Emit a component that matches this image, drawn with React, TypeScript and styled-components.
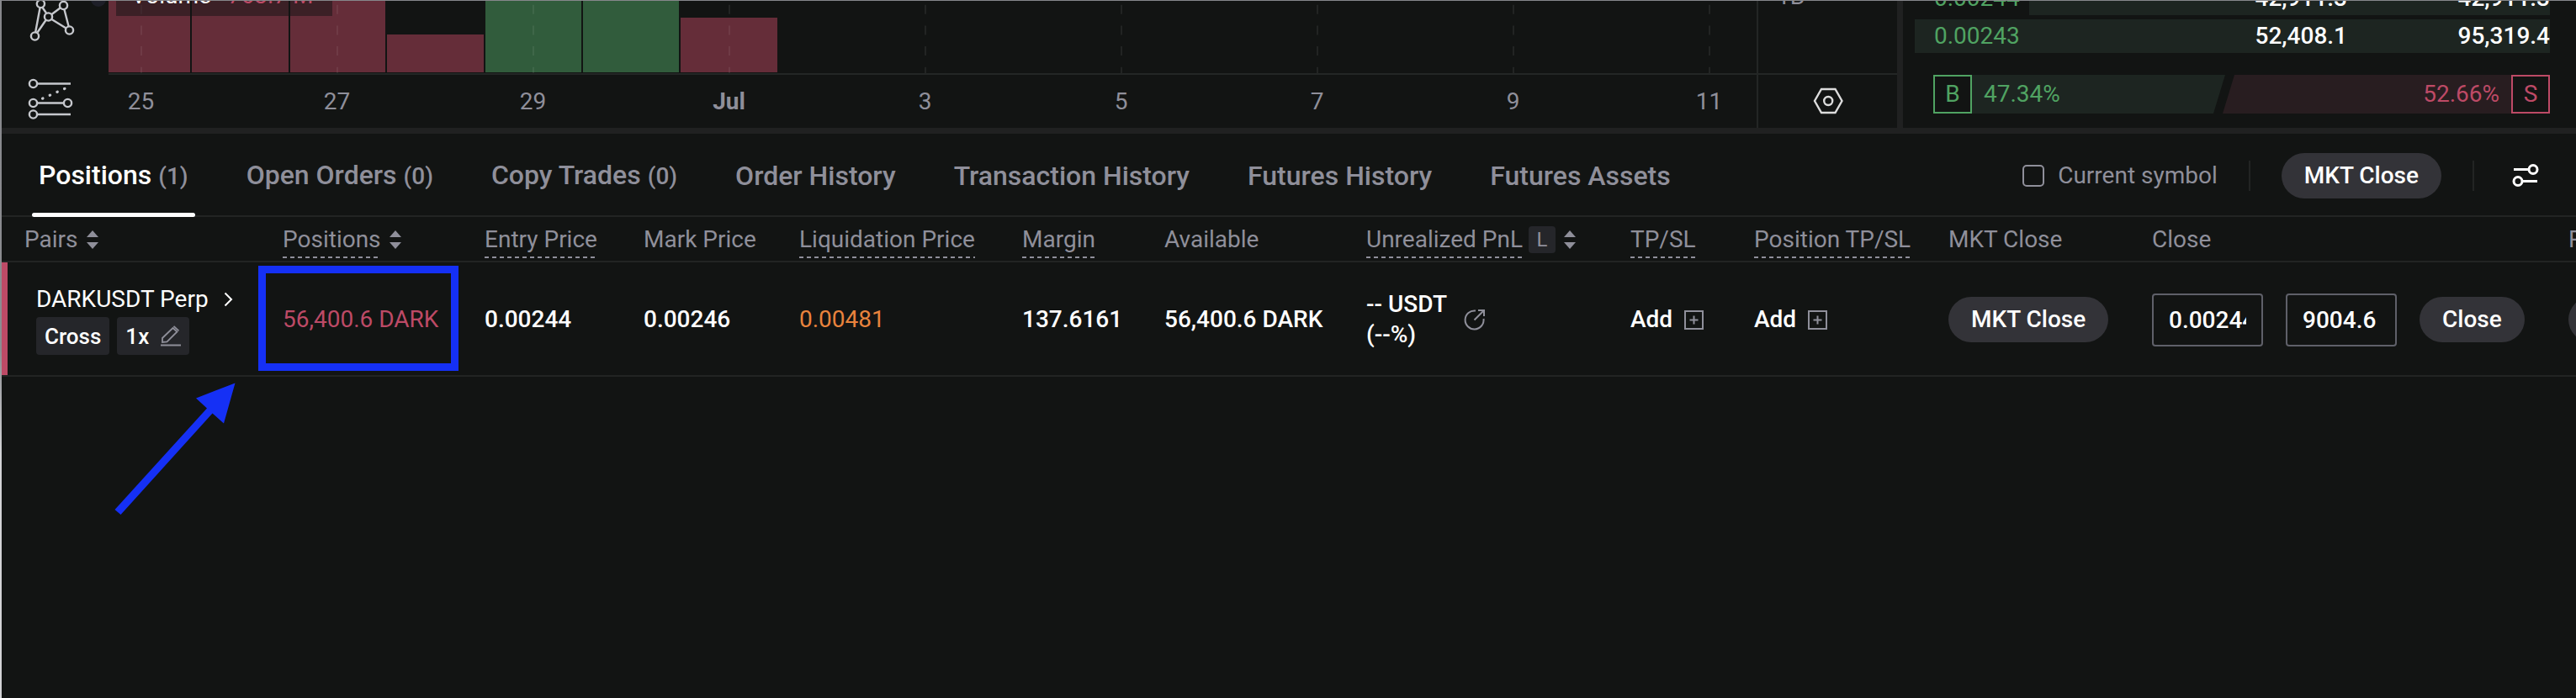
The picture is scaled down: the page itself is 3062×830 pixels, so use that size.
import React from "react";
import styled, { createGlobalStyle, css } from "styled-components";

const c = {
  bg: "#121413",
  band: "#202121",
  line: "#222423",
  grid: "#232625",
  muted: "#8f8f9a",
  white: "#ffffff",
  green: "#50a362",
  greenBar: "#315c3c",
  greenFill: "#1d2521",
  red: "#bd4a66",
  redBar: "#652d39",
  redFill: "#281d20",
  orange: "#e9833d",
  button: "#333338",
  chip: "#25262a",
  outline: "#5f6069",
  mark: "#1530f5",
  icon: "#c6c8cd",
};

const Global = createGlobalStyle`
  *, *::before, *::after { box-sizing: border-box; }
  body { margin: 0; background: ${c.bg}; overflow-x: hidden; }
  button, input { font: inherit; color: inherit; }
`;

const Frame = styled.div`
  display: flex;
  min-height: 100vh;
  padding: 1px 0 0 2px;
  background: linear-gradient(#86878b 0%, #8c8d91 50%, #d2d3d6 65%);
  font-family: Roboto, "Liberation Sans", sans-serif;
  font-size: 28px;
  line-height: 36px;
  color: ${c.white};
`;

const Page = styled.main`
  flex: 1;
  min-width: 0;
  display: flex;
  flex-direction: column;
  background: ${c.bg};
`;

const Upper = styled.div`
  display: flex;
  height: 158px;
  overflow: hidden;
  border-bottom: 7px solid ${c.band};
`;

const DrawingTools = styled.aside`
  position: relative;
  flex: 0 0 127px;
`;

const ToolButton = styled.button`
  display: block;
  width: 62px;
  height: 62px;
  margin: 0 0 0 26px;
  padding: 0;
  border: 0;
  background: none;
  svg { display: block; }
  & + & { margin-top: 22px; }
`;

const ToolToggle = styled.span`
  position: absolute;
  top: -11px;
  right: 3px;
  width: 18px;
  height: 18px;
  border-radius: 9px;
  background: #1e1f28;
`;

const Chart = styled.section`
  flex: 1;
  min-width: 0;
`;

const Plot = styled.div`
  position: relative;
  height: 88px;
  border-bottom: 2px solid ${c.grid};
  svg { display: block; width: 100%; height: 100%; }
`;

const Legend = styled.div`
  position: absolute;
  top: -22px;
  left: 9px;
  display: flex;
  gap: 20px;
  width: 257px;
  height: 40px;
  padding-left: 18px;
  line-height: 32px;
  background: rgba(18, 20, 19, 0.5);
  span { color: ${c.red}; }
`;

const TimeAxis = styled.div`
  display: flex;
  overflow: hidden;
  margin-left: -78px;
  height: 63px;
  line-height: 63px;
  color: ${c.muted};
`;

const Tick = styled.time<{ $strong?: boolean }>`
  flex: 0 0 233px;
  text-align: center;
  font-weight: ${(p) => (p.$strong ? 700 : 400)};
`;

const PriceScale = styled.section`
  flex: 0 0 167px;
  border-left: 2px solid ${c.grid};
`;

const ScaleValues = styled.div`
  height: 88px;
  overflow: hidden;
  padding-left: 22px;
  border-bottom: 2px solid ${c.grid};
  color: ${c.muted};
  div { margin-top: -23px; }
`;

const ScaleSettings = styled.button`
  display: block;
  width: 100%;
  height: 62px;
  padding: 0;
  border: 0;
  background: none;
  svg { display: block; margin: 0 auto; }
`;

const Book = styled.section`
  flex: 0 0 807px;
  display: flex;
  flex-direction: column;
  justify-content: flex-end;
  gap: 5px;
  padding: 0 31px 17px 14px;
  border-left: 7px solid ${c.band};
`;

const BookRow = styled.div<{ $depth: number }>`
  flex: none;
  display: grid;
  grid-template-columns: 1fr 241px 241px;
  padding-left: 23px;
  height: 40px;
  line-height: 40px;
  text-align: right;
  background: linear-gradient(${c.greenFill}, ${c.greenFill}) right / ${(p) => p.$depth}% 100% no-repeat;
`;

const BookPrice = styled.span`
  text-align: left;
  color: ${c.green};
`;

const BookAmount = styled.span`
  font-weight: 500;
`;

const Ratio = styled.div`
  flex: none;
  display: flex;
  margin: 21px 0 0 22px;
  height: 46px;
  line-height: 42px;
`;

const RatioSide = styled.div<{ $sell?: boolean }>`
  display: flex;
  align-items: center;
  gap: 14px;
  color: ${(p) => (p.$sell ? c.red : c.green)};
  background: ${(p) => (p.$sell ? c.redFill : c.greenFill)};
  ${(p) =>
    p.$sell
      ? css`
          flex: 1;
          justify-content: flex-end;
          margin-left: -3px;
          clip-path: polygon(14px 0, 100% 0, 100% 100%, 0 100%);
        `
      : css`
          flex: 0 0 47.34%;
          clip-path: polygon(0 0, 100% 0, calc(100% - 14px) 100%, 0 100%);
        `}
`;

const SideBox = styled.span`
  width: 46px;
  height: 46px;
  text-align: center;
  border: 2px solid currentColor;
  background: ${c.bg};
`;

const TabBar = styled.div`
  display: flex;
  align-items: center;
  justify-content: space-between;
  height: 99px;
  padding: 2px 44px 0 36px;
  border-bottom: 2px solid ${c.line};
`;

const Tabs = styled.nav`
  display: flex;
  align-self: stretch;
  gap: 53px;
`;

const Tab = styled.button<{ $active?: boolean }>`
  position: relative;
  padding: 0 8px;
  border: 0;
  background: none;
  font-size: 32px;
  font-weight: 500;
  white-space: nowrap;
  color: ${(p) => (p.$active ? c.white : c.muted)};
  small { font-size: 28px; color: ${c.muted}; }
  ${(p) =>
    p.$active &&
    css`
      &::after {
        content: "";
        position: absolute;
        left: 0;
        right: 0;
        bottom: -2px;
        height: 5px;
        border-radius: 3px;
        background: ${c.white};
      }
    `}
`;

const TabTools = styled.div`
  display: flex;
  align-items: center;
  gap: 37px;
`;

const SymbolFilter = styled.label`
  display: flex;
  align-items: center;
  gap: 16px;
  color: ${c.muted};
`;

const Checkbox = styled.input`
  appearance: none;
  width: 26px;
  height: 26px;
  margin: 0;
  border: 2px solid ${c.muted};
  border-radius: 5px;
`;

const Divider = styled.span`
  width: 2px;
  height: 36px;
  background: ${c.line};
`;

const Pill = styled.button`
  height: 54px;
  padding: 0 27px;
  border: 0;
  border-radius: 27px;
  background: ${c.button};
  font-weight: 500;
  white-space: nowrap;
`;

const PlainButton = styled.button`
  display: inline-flex;
  align-items: center;
  gap: 14px;
  padding: 0;
  border: 0;
  background: none;
  font-weight: 500;
  svg { display: block; }
`;

const SettingsButton = styled(PlainButton)`
  margin-left: 8px;
`;

const TableArea = styled.section`
  position: relative;
  flex: 1;
  overflow: hidden;
`;

const Table = styled.table`
  table-layout: fixed;
  width: 3252px;
  border-collapse: separate;
  border-spacing: 0;
  text-align: left;
`;

const Th = styled.th`
  height: 54px;
  padding: 2px 0 0;
  border-bottom: 2px solid ${c.line};
  font-weight: 400;
  line-height: 32px;
  white-space: nowrap;
  color: ${c.muted};
  &:first-child { padding-left: 27px; }
`;

const HeadCell = styled.div`
  display: flex;
  align-items: center;
  gap: 10px;
`;

const Term = styled.span`
  display: inline-block;
  padding: 6px 0;
  background: repeating-linear-gradient(90deg, ${c.muted} 0 5px, transparent 5px 9px) bottom / 100% 2px no-repeat;
`;

const ModeKey = styled.kbd`
  width: 32px;
  height: 32px;
  margin-left: -3px;
  border-radius: 4px;
  background: ${c.chip};
  font: inherit;
  font-size: 24px;
  text-align: center;
`;

const Td = styled.td<{ $tone?: string }>`
  position: relative;
  height: 136px;
  padding: 2px 0 0;
  border-bottom: 2px solid ${c.line};
  white-space: nowrap;
  font-weight: ${(p) => (p.$tone ? 400 : 500)};
  color: ${(p) => p.$tone || c.white};
  &:first-child {
    padding-left: 41px;
    box-shadow: inset 7px 0 ${c.red};
  }
`;

const PairLink = styled.a`
  display: flex;
  align-items: center;
  gap: 18px;
  margin-bottom: 3px;
  font-weight: 400;
  color: inherit;
  text-decoration: none;
`;

const Chips = styled.div`
  display: flex;
  gap: 9px;
`;

const Chip = styled.button`
  display: flex;
  align-items: center;
  gap: 14px;
  height: 45px;
  padding: 0 10px;
  border: 0;
  border-radius: 4px;
  background: ${c.chip};
  font-size: 26px;
  font-weight: 500;
`;

const Pnl = styled.div`
  display: flex;
  align-items: center;
  gap: 20px;
`;

const CloseForm = styled.form`
  display: flex;
  align-items: center;
  gap: 27px;
`;

const Amount = styled.input`
  width: 132px;
  height: 63px;
  padding: 0 18px;
  border: 2px solid ${c.outline};
  border-radius: 4px;
  background: none;
  outline: 0;
`;

const Highlight = styled.span`
  position: absolute;
  inset: 4px 31px 5px -29px;
  border: 9px solid ${c.mark};
`;

const Pointer = styled.svg`
  position: absolute;
  left: 128px;
  top: 195px;
`;

const SortIcon = () => (
  <svg width="14" height="22" viewBox="0 0 14 22" fill={c.muted} aria-hidden="true">
    <path d="M7 0 14 8H0zM7 22 0 14h14z" />
  </svg>
);

const PlusBox = () => (
  <svg width="23" height="23" viewBox="0 0 23 23" fill="none" stroke={c.muted} strokeWidth="2" aria-hidden="true">
    <rect x="1" y="1" width="21" height="21" />
    <path d="M11.5 6.5v10M6.5 11.5h10" />
  </svg>
);

const bars = [
  { x: 0, w: 97, top: 0, up: false },
  { x: 99, w: 115, top: 0, up: false },
  { x: 216, w: 113, top: 0, up: false },
  { x: 331, w: 115, top: 40, up: false },
  { x: 448, w: 114, top: 0, up: true },
  { x: 564, w: 114, top: 0, up: true },
  { x: 680, w: 115, top: 20, up: false },
];

const ticks = ["25", "27", "29", "Jul", "3", "5", "7", "9", "11"];

const tabs: { label: string; count?: number }[] = [
  { label: "Positions", count: 1 },
  { label: "Open Orders", count: 0 },
  { label: "Copy Trades", count: 0 },
  { label: "Order History" },
  { label: "Transaction History" },
  { label: "Futures History" },
  { label: "Futures Assets" },
];

const columns: { label: string; width: number; term?: boolean; sort?: boolean; mode?: string }[] = [
  { label: "Pairs", width: 334, sort: true },
  { label: "Positions", width: 240, term: true, sort: true },
  { label: "Entry Price", width: 189, term: true },
  { label: "Mark Price", width: 185 },
  { label: "Liquidation Price", width: 265, term: true },
  { label: "Margin", width: 169, term: true },
  { label: "Available", width: 240 },
  { label: "Unrealized PnL", width: 314, term: true, sort: true, mode: "L" },
  { label: "TP/SL", width: 147, term: true },
  { label: "Position TP/SL", width: 231, term: true },
  { label: "MKT Close", width: 242 },
  { label: "Close", width: 495 },
  { label: "Reverse", width: 201 },
];

export default function App() {
  return (
    <Frame>
      <Global />
      <Page>
        <Upper>
          <DrawingTools>
            <ToolToggle />
            <ToolButton aria-label="Patterns">
              <svg width="62" height="62" viewBox="28 1 62 62" fill="none" stroke={c.icon} strokeWidth="2.4">
                <path d="M47.6 9 42.2 38M50.5 9l4.5 6.5M61.5 17l10-7.5M76.5 11.5l5 19.5M61.5 23l17 10.5M54.5 24l-10 14.5" />
                <circle cx="48.4" cy="4.5" r="4.6" />
                <circle cx="75.5" cy="6.5" r="4.6" />
                <circle cx="57.5" cy="20" r="4.6" />
                <circle cx="82.5" cy="36" r="4.6" />
                <circle cx="41.5" cy="43" r="4.6" />
              </svg>
            </ToolButton>
            <ToolButton aria-label="Forecasting and measurement">
              <svg width="62" height="62" viewBox="28 85 62 62" fill="none" stroke={c.icon} strokeWidth="2.4">
                <path d="M44 99.5h40M44 122.5h32M44 136h40" />
                <circle cx="39.5" cy="99.5" r="4.6" />
                <circle cx="39.5" cy="122.5" r="4.6" />
                <circle cx="80.5" cy="122.5" r="4.6" />
                <circle cx="39.5" cy="136" r="4.6" />
                <path d="M50.5 117.2 80 104" strokeWidth="3.2" strokeLinecap="round" strokeDasharray="0.5 9" />
              </svg>
            </ToolButton>
          </DrawingTools>
          <Chart>
            <Plot>
              <svg aria-label="Volume chart">
                {bars.map((b) => (
                  <rect key={b.x} x={b.x} y={b.top} width={b.w} height={85 - b.top} fill={b.up ? c.greenBar : c.redBar} />
                ))}
                {ticks.map((t, i) => (
                  <path
                    key={t}
                    d={`M${39 + i * 233} -20V86`}
                    stroke="#ffffff"
                    strokeOpacity="0.07"
                    strokeWidth="2"
                    strokeDasharray="11 13.7"
                  />
                ))}
              </svg>
              <Legend>
                Volume <span>763.7 M</span>
              </Legend>
            </Plot>
            <TimeAxis>
              {ticks.map((t) => (
                <Tick key={t} $strong={t === "Jul"}>
                  {t}
                </Tick>
              ))}
            </TimeAxis>
          </Chart>
          <PriceScale>
            <ScaleValues>
              <div>1B</div>
            </ScaleValues>
            <ScaleSettings aria-label="Scale settings">
              <svg width="36" height="32" viewBox="0 0 36 32" fill="none" stroke="#dcdcdc" strokeWidth="2.4">
                <path d="M10 2h16.500L34.500 16 26.500 30H10L2 16z" />
                <circle cx="18.2" cy="16" r="5" />
              </svg>
            </ScaleSettings>
          </PriceScale>
          <Book>
            <BookRow $depth={82}>
              <BookPrice>0.00244</BookPrice>
              <BookAmount>42,911.3</BookAmount>
              <BookAmount>42,911.3</BookAmount>
            </BookRow>
            <BookRow $depth={100}>
              <BookPrice>0.00243</BookPrice>
              <BookAmount>52,408.1</BookAmount>
              <BookAmount>95,319.4</BookAmount>
            </BookRow>
            <Ratio>
              <RatioSide>
                <SideBox>B</SideBox>
                47.34%
              </RatioSide>
              <RatioSide $sell>
                52.66%
                <SideBox>S</SideBox>
              </RatioSide>
            </Ratio>
          </Book>
        </Upper>

        <TabBar>
          <Tabs>
            {tabs.map((t, i) => (
              <Tab key={t.label} $active={i === 0}>
                {t.label} {t.count !== undefined && <small>({t.count})</small>}
              </Tab>
            ))}
          </Tabs>
          <TabTools>
            <SymbolFilter>
              <Checkbox type="checkbox" />
              Current symbol
            </SymbolFilter>
            <Divider />
            <Pill>MKT Close</Pill>
            <Divider />
            <SettingsButton aria-label="Table settings">
              <svg width="32" height="28" viewBox="0 0 32 28" fill="none" stroke="#fff" strokeWidth="3">
                <path d="M2 6.5h18M12 20.5h18" />
                <circle cx="25" cy="6.5" r="5" />
                <circle cx="7" cy="20.5" r="5" />
              </svg>
            </SettingsButton>
          </TabTools>
        </TabBar>

        <TableArea>
          <Table>
            <colgroup>
              {columns.map((col) => (
                <col key={col.label} width={col.width} />
              ))}
            </colgroup>
            <thead>
              <tr>
                {columns.map((col) => (
                  <Th key={col.label}>
                    <HeadCell>
                      {col.term ? <Term>{col.label}</Term> : col.label}
                      {col.mode && <ModeKey>{col.mode}</ModeKey>}
                      {col.sort && <SortIcon />}
                    </HeadCell>
                  </Th>
                ))}
              </tr>
            </thead>
            <tbody>
              <tr>
                <Td>
                  <PairLink href="#darkusdt">
                    DARKUSDT Perp
                    <svg width="11" height="18" viewBox="0 0 11 18" fill="none" stroke="#fff" strokeWidth="2">
                      <path d="M1.5 1.5 9 9l-7.5 7.5" />
                    </svg>
                  </PairLink>
                  <Chips>
                    <Chip>Cross</Chip>
                    <Chip aria-label="Leverage 1x">
                      1x
                      <svg width="24" height="25" viewBox="0 0 24 25" fill="none" stroke={c.muted} strokeWidth="1.8">
                        <path d="M0 23.5h24M2 20v-5L14.5 3l5 4.5L7.5 19.500zM15.5 0.8l6 5.500" />
                      </svg>
                    </Chip>
                  </Chips>
                </Td>
                <Td $tone={c.red}>
                  56,400.6 DARK
                  <Highlight />
                </Td>
                <Td>0.00244</Td>
                <Td>0.00246</Td>
                <Td $tone={c.orange}>0.00481</Td>
                <Td>137.6161</Td>
                <Td>56,400.6 DARK</Td>
                <Td>
                  <Pnl>
                    <div>
                      -- USDT
                      <br />
                      (--%)
                    </div>
                    <PlainButton aria-label="Share">
                      <svg width="26" height="26" viewBox="0 0 26 26" fill="none" stroke={c.muted} strokeWidth="2">
                        <path d="M14 2.5A11 11 0 1 0 23.5 12M12.5 13.5l11-11M17 2h7v7" />
                      </svg>
                    </PlainButton>
                  </Pnl>
                </Td>
                <Td>
                  <PlainButton>
                    Add <PlusBox />
                  </PlainButton>
                </Td>
                <Td>
                  <PlainButton>
                    Add <PlusBox />
                  </PlainButton>
                </Td>
                <Td>
                  <Pill>MKT Close</Pill>
                </Td>
                <Td>
                  <CloseForm>
                    <Amount aria-label="Close price" defaultValue="0.00244" />
                    <Amount aria-label="Close amount" defaultValue="9004.6" />
                    <Pill type="button">Close</Pill>
                  </CloseForm>
                </Td>
                <Td>
                  <Pill>Reverse</Pill>
                </Td>
              </tr>
            </tbody>
          </Table>
          <Pointer width="154" height="165" viewBox="130 453 154 165" fill={c.mark} aria-hidden="true">
            <path d="M136.5 606 246 485.5l-13-12 46.5-18L266 503.5l-13.500-12L143.500 612z" />
          </Pointer>
        </TableArea>
      </Page>
    </Frame>
  );
}
